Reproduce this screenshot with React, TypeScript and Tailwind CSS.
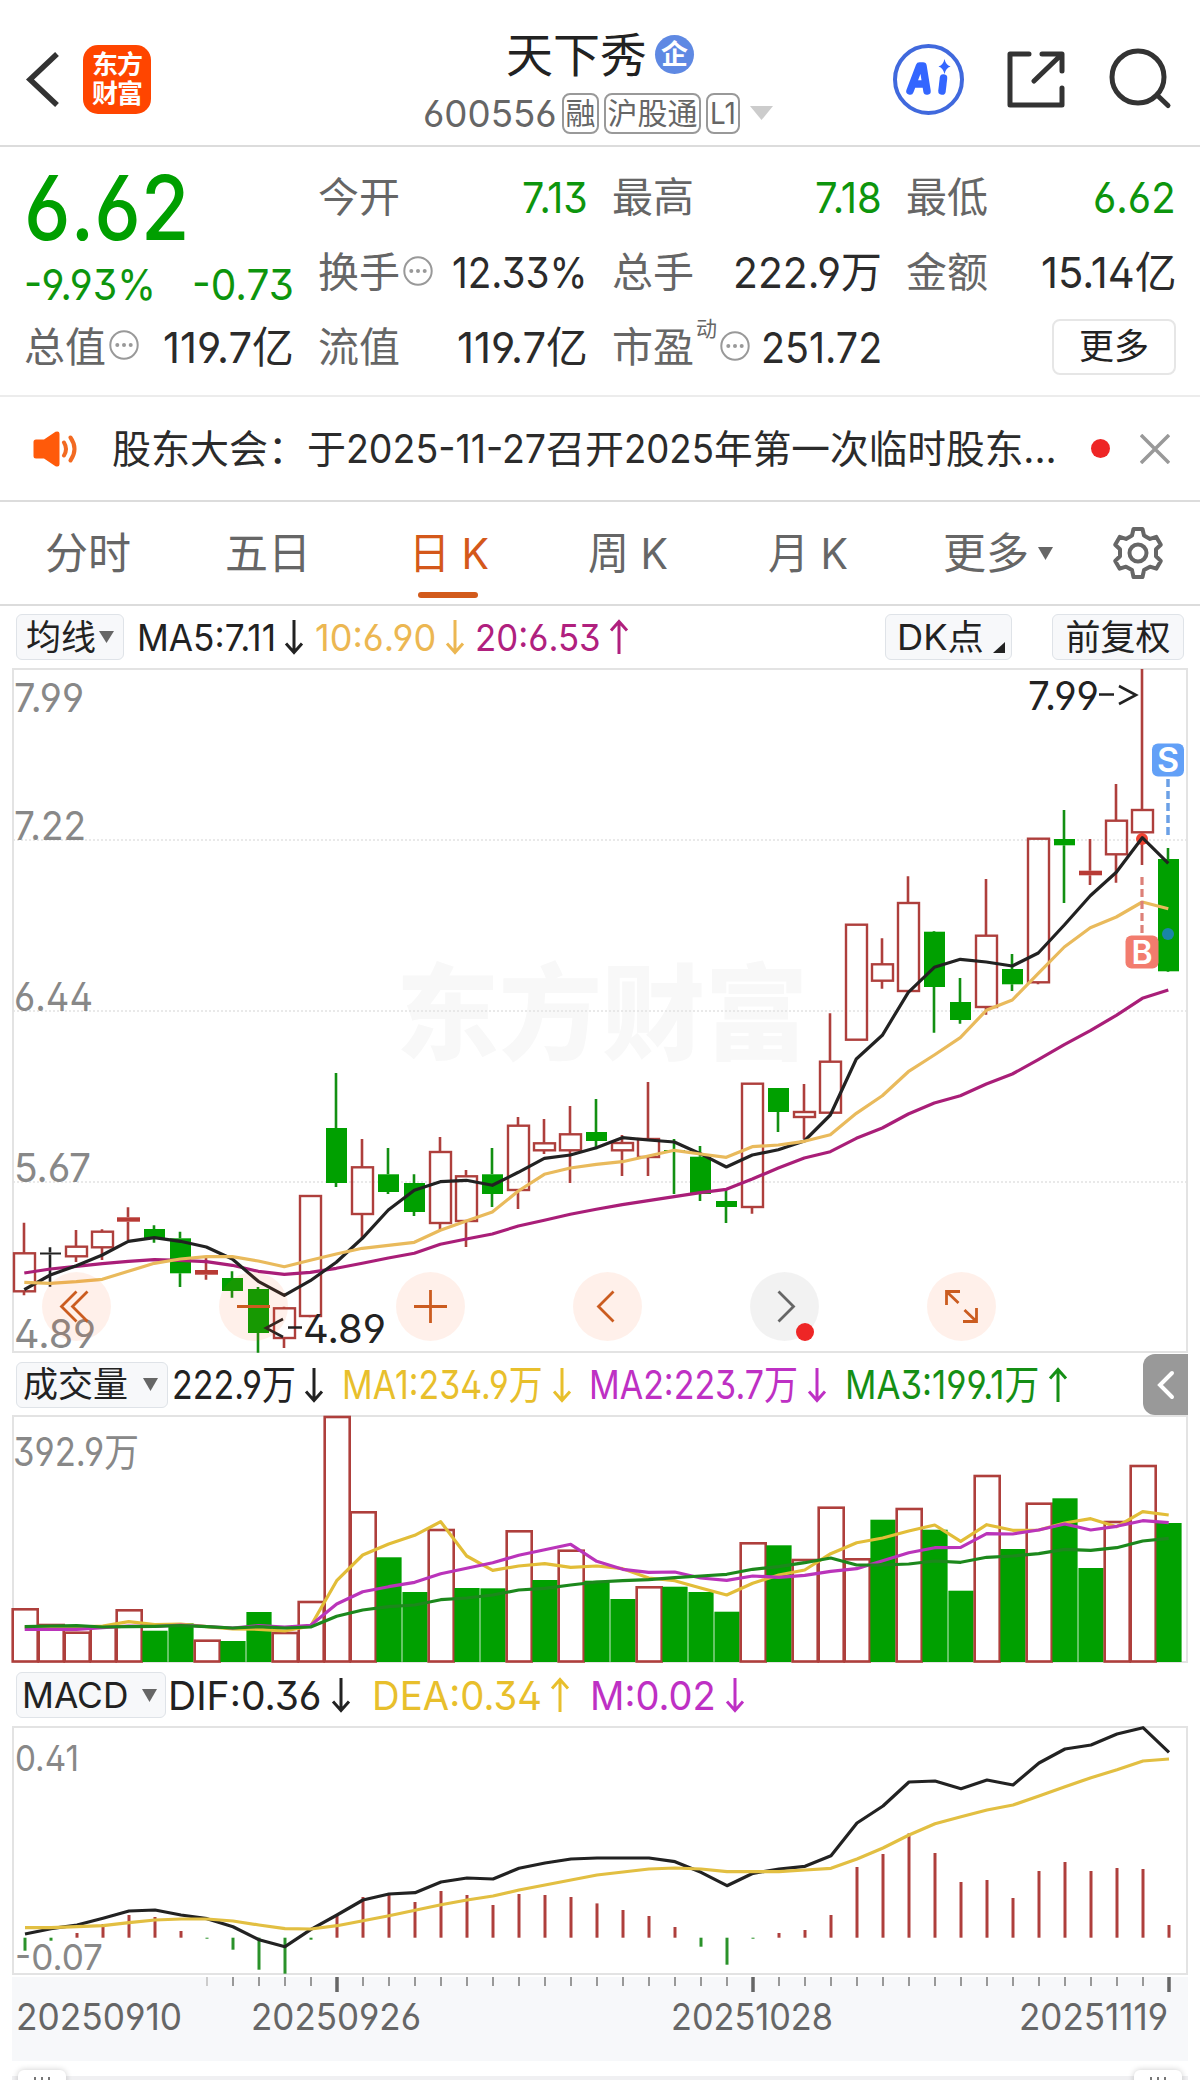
import React, { useLayoutEffect, useRef } from 'react';
import clsx from 'clsx';

const FONT = 'Inter, "Noto Sans CJK SC", sans-serif';
const RED = '#ae3f3c';
const GREEN = '#00a000';

// first column is centred on x=24, one column per trading day
const cx = (i: number) => 24 + i * 26;

type Candle = [kind: 'r' | 'g' | 'k' | 'f', high: number, top: number, bottom: number, low: number];

const CANDLES: Candle[] = [
  ['r', 1222.7, 1253.3, 1291.3, 1295.3],
  ['k', 1247.3, 1252.5, 1254.5, 1286.7],
  ['r', 1230, 1246.7, 1256.3, 1262],
  ['r', 1229.3, 1231.7, 1247.3, 1260],
  ['f', 1207.3, 1217.3, 1221.7, 1240],
  ['g', 1225.3, 1229, 1239, 1242.7],
  ['g', 1231.7, 1238.3, 1273.3, 1287],
  ['f', 1258, 1270, 1274.7, 1279.7],
  ['g', 1271.3, 1278, 1291, 1297.7],
  ['g', 1287, 1289, 1333, 1352.7],
  ['r', 1306.7, 1308.3, 1338, 1348],
  ['r', 1195, 1196, 1316, 1317.3],
  ['g', 1073, 1128, 1183, 1187],
  ['r', 1139, 1167.3, 1214, 1238],
  ['g', 1148, 1174.3, 1192, 1194],
  ['g', 1174.3, 1183, 1212, 1216],
  ['r', 1137, 1152, 1223, 1230],
  ['r', 1170, 1176.3, 1221, 1247],
  ['g', 1148, 1174.3, 1194, 1207],
  ['r', 1117, 1125.7, 1190, 1209],
  ['r', 1119, 1143.3, 1150.3, 1154],
  ['r', 1106, 1134.3, 1150.3, 1183],
  ['g', 1099, 1132, 1141, 1149.3],
  ['r', 1135, 1143, 1150.3, 1176],
  ['r', 1082, 1139, 1157, 1176],
  ['g', 1139, 1150, 1152, 1194],
  ['g', 1146, 1156.7, 1194, 1201],
  ['g', 1190, 1201, 1207, 1223],
  ['r', 1083, 1083.7, 1207, 1213.7],
  ['g', 1088, 1088, 1112, 1132],
  ['r', 1084, 1112, 1117, 1139],
  ['r', 1013.3, 1061.7, 1112.7, 1113],
  ['r', 924, 924.7, 1039.7, 1040],
  ['r', 938.3, 964.3, 980.7, 988.7],
  ['r', 876.3, 903, 991, 992],
  ['g', 931, 931.7, 987, 1032.7],
  ['g', 978, 1002, 1020, 1023.7],
  ['r', 879, 935.7, 1007, 1014.7],
  ['g', 954, 969, 984.3, 991],
  ['r', 838, 838.7, 982.3, 984.3],
  ['g', 810, 839, 845.3, 903],
  ['f', 839, 870.7, 875.3, 885],
  ['r', 784, 820.7, 854.3, 882.7],
  ['r', 669, 810, 832.3, 865],
  ['g', 848, 859, 971.3, 972],
];

const MA5 = [1289.7, 1275, 1265.7, 1255, 1241.3, 1237.7, 1241.3, 1247, 1259, 1281.3, 1295.3, 1280.7, 1262.3, 1238.3, 1210, 1190.3, 1181.7, 1180.3, 1185.3, 1172.3, 1158.3, 1155, 1147.7, 1137.7, 1140, 1142, 1153.7, 1167, 1155, 1149.7, 1141, 1115, 1059, 1035.3, 992.3, 967.3, 959.3, 962, 966, 953, 925, 895.7, 872.3, 837.7, 863.3];
const MA10 = [1282.3, 1283.3, 1281.7, 1279.3, 1271.3, 1263.3, 1259, 1256.7, 1256.7, 1261, 1266.7, 1260.3, 1254, 1248.3, 1245.3, 1242.3, 1230.3, 1221, 1212, 1191, 1174.3, 1168, 1164.3, 1161.7, 1156, 1150.3, 1154, 1157.3, 1146.7, 1145, 1141.3, 1134.7, 1113.3, 1095.7, 1071.7, 1055, 1037.7, 1010.3, 1000, 973.3, 947, 927.7, 917, 902, 908.7];
const MA20 = [1273, 1269, 1266.3, 1263.7, 1261.3, 1259.7, 1260.3, 1261.7, 1265.3, 1271.3, 1274.3, 1272.3, 1268.3, 1263.3, 1258, 1253.3, 1244.3, 1239, 1234, 1226, 1220.3, 1214.3, 1209.3, 1204.7, 1200.7, 1196.7, 1192.7, 1189.3, 1179, 1168, 1158, 1151.7, 1138.3, 1128, 1114, 1103, 1095.7, 1084, 1074, 1059.7, 1044.7, 1030.7, 1015.3, 998.3, 990];

const VOL_KIND = 'rrrrrggrggrrrrggrggrgrggrgggrgrrrgrggrgrggrrg';
const VOL_TOP = [1609.3, 1625, 1632.7, 1627, 1610.3, 1630.7, 1623.3, 1640.7, 1641, 1612, 1633, 1602, 1417, 1512.3, 1557.3, 1592, 1530, 1588, 1588.3, 1531.3, 1580, 1550.7, 1580.7, 1599, 1587.3, 1586.7, 1592, 1611.7, 1543.3, 1545.3, 1560, 1507.7, 1559.3, 1519.7, 1509, 1529.7, 1590.7, 1476, 1549, 1503.7, 1498.3, 1568, 1522, 1466, 1523];
const VMA1 = [1627, 1627, 1627, 1626, 1621.7, 1624.7, 1624, 1626.7, 1629, 1629.3, 1631, 1626, 1580.7, 1555, 1544, 1535.3, 1521.7, 1556, 1570.3, 1566, 1563.7, 1567.3, 1566, 1568.7, 1578, 1580.7, 1588, 1595, 1583.3, 1575, 1570, 1553.7, 1542.7, 1538, 1531, 1525, 1541.3, 1524.7, 1530.3, 1530, 1523, 1518.7, 1526.7, 1511.7, 1515];
const VMA2 = [1629.3, 1629.3, 1629.3, 1627.7, 1626, 1626.5, 1625, 1626.5, 1628, 1625.7, 1627, 1625.3, 1604, 1591.7, 1586.7, 1582.3, 1573.7, 1568.3, 1562.7, 1555.3, 1549.7, 1544.3, 1561.3, 1569.3, 1572.3, 1572, 1578, 1580.3, 1576, 1577.3, 1575.3, 1571.3, 1568.7, 1560.7, 1552.7, 1547.7, 1547.3, 1533.7, 1534, 1530, 1524, 1530, 1526.3, 1520.7, 1522.7];
const VMA3 = [1626.7, 1626, 1625.7, 1627, 1626.7, 1626.3, 1625.5, 1626.7, 1628, 1626.7, 1628, 1627, 1616.3, 1610, 1606.7, 1605, 1599.7, 1598, 1595, 1590, 1588.3, 1585, 1582, 1580.7, 1579.7, 1577.7, 1576, 1574.3, 1569.3, 1566.7, 1562.7, 1558, 1565, 1565, 1564, 1561, 1562.3, 1557.3, 1556, 1553.7, 1549.3, 1550.3, 1547.7, 1541, 1538.3];

const DIF = [1934, 1928.7, 1925, 1918.3, 1911, 1910, 1915, 1918.7, 1926.7, 1939.7, 1946.7, 1929.3, 1915, 1900, 1894, 1892.7, 1882, 1878, 1879, 1868.3, 1863, 1859, 1858, 1858, 1858, 1861.7, 1872.3, 1885.7, 1873.3, 1869, 1866.3, 1855.7, 1823, 1806, 1782, 1781, 1788.7, 1780, 1785, 1763, 1749, 1745, 1734, 1727.7, 1752.3];
const DEA = [1927.7, 1927.7, 1926.7, 1925.7, 1922.7, 1920, 1919, 1919, 1921, 1925, 1928.7, 1929, 1925.7, 1920.7, 1915.7, 1910.3, 1904.7, 1900, 1896, 1890, 1885, 1880, 1875, 1872, 1869, 1868, 1869, 1871.7, 1871.7, 1871.7, 1870, 1868.3, 1859, 1848, 1835, 1823.7, 1816.7, 1810, 1805, 1796, 1786.7, 1777.7, 1769.7, 1761, 1759];
const HIST = [-13, -3, 4.7, 13.7, 22.7, 20.7, 6.7, -1, -12, -32, -36, -2, 22.7, 40.7, 43.7, 35.7, 46.7, 42.7, 32.7, 43.7, 42.7, 40.7, 34.3, 27.7, 21.7, 10.7, -9, -27, -1, 4.7, 7.7, 22.7, 70.7, 83.7, 104.3, 84.7, 55.7, 57.7, 39.7, 66.7, 75.7, 66.7, 69.7, 68.7, 12.7];

// Squeezes or stretches a line of text to exactly `w` pixels
const Fit: React.FC<{ w: number; className?: string; children: string }> = ({ w, className, children }) => {
  const ref = useRef<HTMLSpanElement>(null);
  useLayoutEffect(() => {
    const el = ref.current;
    if (el) el.style.transform = `scaleX(${w / el.offsetWidth})`;
  }, [w, children]);
  return (
    <span className={clsx('inline-block shrink-0 whitespace-nowrap', className)} style={{ width: w }}>
      <span ref={ref} className="inline-block origin-left">{children}</span>
    </span>
  );
};

const Line: React.FC<{ data: number[]; color: string; dx?: number }> = ({ data, color, dx = 0.3 }) => (
  <polyline
    points={data.map((y, i) => `${cx(i) + dx},${y}`).join(' ')}
    fill="none"
    stroke={color}
    strokeWidth={3.2}
    strokeLinejoin="round"
  />
);

const Label: React.FC<{ x: number; y: number; w: number; size?: number; color?: string; children: string }> = ({
  x, y, w, size = 39, color = '#888', children,
}) => (
  <text x={x} y={y} fontSize={size} fill={color} textLength={w} lengthAdjust="spacingAndGlyphs">{children}</text>
);

const Dots = ({ className }: { className?: string }) => (
  <svg className={clsx('w-[30px] h-[30px] shrink-0', className)} viewBox="0 0 30 30">
    <circle cx="15" cy="15" r="13.7" fill="none" stroke="#999" strokeWidth="2" />
    <circle cx="8.3" cy="15" r="2" fill="#999" />
    <circle cx="15" cy="15" r="2" fill="#999" />
    <circle cx="21.7" cy="15" r="2" fill="#999" />
  </svg>
);

const Arrow = ({ up, className }: { up?: boolean; className?: string }) => (
  <svg className={clsx('w-[20px] h-[36px] shrink-0', up && 'rotate-180', className)} viewBox="0 0 20 36" fill="none" stroke="currentColor" strokeWidth="3">
    <path d="M10 1v32M2 24.5l8 9 8-9" />
  </svg>
);

const Triangle = ({ className }: { className?: string }) => (
  <svg className={clsx('shrink-0', className)} viewBox="0 0 16 13" preserveAspectRatio="none">
    <path d="M0 0h16L8 13z" fill="currentColor" />
  </svg>
);

const Chip: React.FC<{ className?: string; children: React.ReactNode }> = ({ className, children }) => (
  <div className={clsx('flex h-[46px] shrink-0 items-center rounded-md border border-[#dfe3e8] bg-[#f7f8fa] text-[35px] text-[#222]', className)}>
    {children}
  </div>
);

interface StatProps {
  label: string;
  value: string;
  w: number;
  green?: boolean;
  extra?: React.ReactNode;
}

const Stat: React.FC<StatProps> = ({ label, value, w, green, extra }) => (
  <div className="flex h-[75px] items-center">
    <span className="-ml-[2px] text-[41px] text-[#666]">{label}</span>
    {extra}
    <Fit w={w} className={clsx('ml-auto text-[43px]', green ? 'text-[#0d950d]' : 'text-[#2b2b2b]')}>{value}</Fit>
  </div>
);

const Header = () => (
  <header className="flex h-[147px] border-b-2 border-[#dcdcdc]">
    <svg className="mt-[51px] ml-[25px] h-[57px] w-[35px]" viewBox="0 0 35 57" fill="none" stroke="#333" strokeWidth="5.5">
      <path d="M32 3L5 28.500L32 54" />
    </svg>
    <div className="mt-[45px] ml-[23px] flex h-[69px] w-[68px] flex-col items-center justify-center gap-[3px] rounded-[15px] bg-[#ff4500] text-[26px] font-bold text-white">
      <span className="tracking-[-1px]">东方</span>
      <span className="tracking-[-1px]">财富</span>
    </div>
    <div className="ml-[272px] w-[352px]">
      <div className="mt-[31px] ml-[83px] flex h-[46px] items-center">
        <span className="text-[47px] text-[#222]">天下秀</span>
        <span className="ml-[8px] flex h-[39px] w-[39px] items-center justify-center rounded-full bg-[#5f89e3] text-[27px] font-bold text-white">企</span>
      </div>
      <div className="mt-[15px] flex h-[42px] items-center text-[#666]">
        <Fit w={134} className="mr-[5px] text-[37px]">600556</Fit>
        <span className="flex h-[41px] w-[37px] items-center justify-center rounded-lg border-2 border-[#999] text-[30px]">融</span>
        <span className="ml-[5px] flex h-[41px] w-[97px] items-center justify-center rounded-lg border-2 border-[#999] text-[30px]">沪股通</span>
        <span className="ml-[5px] flex h-[41px] w-[34px] items-center justify-center rounded-lg border-2 border-[#999] text-[30px]">
          <Fit w={26}>L1</Fit>
        </span>
        <Triangle className="ml-[10px] h-[14px] w-[23px] text-[#ccc]" />
      </div>
    </div>
    <svg className="mt-[43px] ml-[117px] h-[73px] w-[73px]" viewBox="0 0 73 73">
      <circle cx="36.500" cy="36.500" r="33.500" fill="none" stroke="#4069dd" strokeWidth="4" />
      <g fill="none" stroke="#3366ff" strokeWidth="7.500" strokeLinecap="round" strokeLinejoin="round">
        <path d="M18 48L27.500 23H31L35 48M22 41h11" />
        <path d="M51.500 35L50 48" />
      </g>
      <path d="M52.500 16q1.200 5.800 6 7.500q-4.800 1.700-6 7.500q-1.200-5.800-6-7.500q4.800-1.700 6-7.500z" fill="#3366ff" />
    </svg>
    <svg className="mt-[48px] ml-[39px] h-[64px] w-[64px]" viewBox="0 0 64 64" fill="none" stroke="#333" strokeWidth="5" strokeLinecap="round" strokeLinejoin="round">
      <path d="M25 6H6V57H58V40M38 6H58V23M57 7L30 33" />
    </svg>
    <svg className="mt-[46px] ml-[39px] h-[66px] w-[66px]" viewBox="0 0 66 66" fill="none" stroke="#333" strokeWidth="5" strokeLinecap="round">
      <circle cx="31" cy="31" r="26" />
      <path d="M50 49L61 59.500" />
    </svg>
  </header>
);

const Quote = () => (
  <section className="flex h-[250px] gap-[26px] border-b-2 border-[#ececec] pt-[13px] pl-[24px]">
    <div className="w-[270px]">
      <div className="flex h-[95px] items-center text-[89px] font-medium text-[#009f00]">
        <Fit w={165}>6.62</Fit>
      </div>
      <div className="flex h-[58px] items-center justify-between text-[43px] text-[#0d950d]">
        <Fit w={132}>-9.93%</Fit>
        <Fit w={102}>-0.73</Fit>
      </div>
      <div className="flex h-[68px] items-center">
        <span className="text-[41px] text-[#666]">总值</span>
        <Dots className="ml-[3px] -mt-1" />
        <Fit w={131} className="ml-auto text-[43px] text-[#2b2b2b]">119.7亿</Fit>
      </div>
    </div>
    <div className="w-[268px]">
      <Stat label="今开" value="7.13" w={66} green />
      <Stat label="换手" value="12.33%" w={136} extra={<Dots className="ml-[3px] -mt-1" />} />
      <Stat label="流值" value="119.7亿" w={131} />
    </div>
    <div className="w-[268px]">
      <Stat label="最高" value="7.18" w={67} green />
      <Stat label="总手" value="222.9万" w={149} />
      <Stat
        label="市盈"
        value="251.72"
        w={121}
        extra={
          <>
            <span className="ml-[2px] mb-[38px] text-[21px] text-[#666]">动</span>
            <Dots className="ml-[3px] -mt-1" />
          </>
        }
      />
    </div>
    <div className="w-[268px]">
      <Stat label="最低" value="6.62" w={83} green />
      <Stat label="金额" value="15.14亿" w={135} />
      <div className="flex h-[73px] items-center justify-end">
        <button className="h-[56px] w-[124px] rounded-lg border-2 border-[#e6e6e6] text-[35px] text-[#222]">更多</button>
      </div>
    </div>
  </section>
);

const Notice = () => (
  <section className="flex h-[105px] items-center border-b-2 border-[#dcdcdc]">
    <svg className="ml-[33px] h-[36px] w-[46px]" viewBox="0 0 46 36">
      <path d="M3 8.500h8L22.500 .800q4-1.200 4 2v30.400q0 3.200-4 2L11 27.500H3q-2.500 0-2.500-2.500v-14q0-2.500 2.500-2.500z" fill="#ff5a0a" />
      <path d="M31 11.500q4 6.500 0 13M37.500 6.500q8 11.500 0 23" fill="none" stroke="#f26a22" strokeWidth="4" strokeLinecap="round" />
    </svg>
    <div className="ml-[33px] flex text-[39px] text-[#2b2b2b]">
      <span>股东大会：于</span>
      <Fit w={200}>2025-11-27</Fit>
      <span>召开</span>
      <Fit w={90}>2025</Fit>
      <Fit w={343}>年第一次临时股东...</Fit>
    </div>
    <span className="ml-[34px] h-[19px] w-[19px] rounded-full bg-[#ee2626]" />
    <svg className="ml-[30px] h-[30px] w-[30px]" viewBox="0 0 30 30" stroke="#999" strokeWidth="3.5">
      <path d="M1 1l28 28M29 1L1 29" />
    </svg>
  </section>
);

const Tabs = () => (
  <nav className="flex h-[104px] items-center border-b-2 border-[#dcdcdc] text-[43px] text-[#666]">
    <span className="ml-[45px] w-[180px]">分时</span>
    <span className="w-[184px]">五日</span>
    <span className="relative w-[179px] text-[#d4581a]">
      <Fit w={80}>日 K</Fit>
      <span className="absolute top-[60px] left-[9px] h-[6px] w-[60px] rounded-full bg-[#d25a1b]" />
    </span>
    <span className="w-[180px]"><Fit w={80}>周 K</Fit></span>
    <span className="w-[175px]"><Fit w={80}>月 K</Fit></span>
    <span className="w-[95px]">更多</span>
    <Triangle className="h-[13px] w-[15px]" />
    <svg className="ml-[58px] h-[54px] w-[54px]" viewBox="0 0 54 54" fill="none" stroke="#666" strokeWidth="4" strokeLinejoin="round">
      <path d="M22.500 3h9l1.500 6.500 6 3.400 6.300-2 4.500 7.800-4.800 4.600v7l4.800 4.600-4.500 7.800-6.300-2-6 3.400-1.500 6.900h-9l-1.500-6.900-6-3.400-6.300 2-4.500-7.800 4.800-4.600v-7l-4.800-4.600 4.500-7.800 6.300 2 6-3.400z" />
      <circle cx="27" cy="27" r="8.500" />
    </svg>
  </nav>
);

const Toolbar = () => (
  <div className="flex h-[62px] items-center pl-4 text-[37px]">
    <Chip className="w-[108px] justify-center gap-[3px]">
      <span>均线</span>
      <Triangle className="h-[12px] w-[15px] text-[#666]" />
    </Chip>
    <Fit w={139} className="ml-[13px] text-[#222]">MA5:7.11</Fit>
    <Arrow className="ml-[8px] text-[#222]" />
    <Fit w={121} className="ml-[11px] text-[#ecb752]">10:6.90</Fit>
    <Arrow className="ml-[9px] text-[#ecb752]" />
    <Fit w={126} className="ml-[10px] text-[#b0207e]">20:6.53</Fit>
    <Arrow up className="ml-[8px] text-[#b0207e]" />
    <Chip className="ml-auto w-[127px] pl-[11px]">
      <Fit w={87}>DK点</Fit>
      <svg className="mt-[20px] ml-[9px] h-[11px] w-[12px]" viewBox="0 0 12 11"><path d="M12 0v11H0z" fill="#222" /></svg>
    </Chip>
    <Chip className="mr-4 ml-[40px] w-[132px] justify-center">前复权</Chip>
  </div>
);

const FLOAT_X = [76.5, 253.5, 430.5, 607.5, 784.5, 961.5];

const PriceChart = () => (
  <svg className="block h-[686px] w-[1200px] overflow-visible" viewBox="0 668 1200 686">
    <rect x="13" y="669" width="1174" height="683" fill="none" stroke="#e3e3e3" strokeWidth="2" />
    <text x="396" y="1052" fontSize="104" fontWeight="900" fill="#f8f8f8" textLength="412" lengthAdjust="spacingAndGlyphs">东方财富</text>
    {[840, 1011, 1182].map((y) => (
      <path key={y} d={`M13 ${y}H1187`} stroke="#e2e2e2" strokeWidth="1.500" strokeDasharray="2 2" />
    ))}
    <Label x={14} y={712} w={70}>7.99</Label>
    <Label x={14} y={840} w={72}>7.22</Label>
    <Label x={14} y={1011} w={79}>6.44</Label>
    <Label x={14} y={1182} w={77}>5.67</Label>
    <Label x={14} y={1348} w={82}>4.89</Label>

    {CANDLES.map(([kind, high, top, bottom, low], i) => {
      const x = cx(i);
      const color = kind === 'g' ? '#129012' : kind === 'k' ? '#222' : RED;
      return (
        <g key={i}>
          <path d={`M${x} ${high}V${top}M${x} ${bottom}V${low}`} stroke={color} strokeWidth="2.600" />
          {kind === 'r' && <rect x={x - 10} y={top} width={21} height={bottom - top} fill="none" stroke={RED} strokeWidth="2.400" />}
          {kind === 'g' && <rect x={x - 10} y={top} width={21} height={bottom - top} fill={GREEN} />}
          {kind === 'f' && <rect x={x - 11} y={top} width={23} height={bottom - top} fill="#b83a35" />}
          {kind === 'k' && <rect x={x - 10} y={top} width={21} height={bottom - top} fill="#222" />}
        </g>
      );
    })}

    <circle cx="1142" cy="839" r="6" fill="#ee4433" />
    <Line data={MA20} color="#a91e78" />
    <Line data={MA5} color="#222" />
    <Line data={MA10} color="#e9ba5c" />

    <path d="M1142 877V933" stroke="#dc8078" strokeWidth="3.200" strokeDasharray="8 4" />
    <path d="M1168 779V836" stroke="#6ba0e6" strokeWidth="3.500" strokeDasharray="8 4" />
    <circle cx="1168" cy="934" r="6" fill="#1a85a8" />
    <rect x="1152" y="743.500" width="32" height="33" rx="6" fill="#62a0f7" />
    <text x="1168" y="772" fontSize="34" fontWeight="600" fill="#fff" textAnchor="middle">S</text>
    <rect x="1125.500" y="935.500" width="33" height="33" rx="6" fill="#f27c6e" />
    <text x="1142" y="963.500" fontSize="32" fontWeight="600" fill="#fff" textAnchor="middle">B</text>

    <Label x={1028} y={710} w={71} color="#222">7.99</Label>
    <path d="M1099 694.500h15M1119 686l17 9-17 9" fill="none" stroke="#222" strokeWidth="2.600" />
    <Label x={303} y={1343} w={83} color="#222">4.89</Label>
    <path d="M283 1319l-17 9 17 9M288 1327.500h14" fill="none" stroke="#222" strokeWidth="2.600" />

    {FLOAT_X.map((x, i) => (
      <circle key={x} cx={x} cy="1306.500" r="34.500" fill={i === 4 ? 'rgba(0,0,0,0.05)' : 'rgba(255,90,20,0.09)'} />
    ))}
    <g fill="none" stroke="#cb5c20" strokeWidth="2.800">
      <path d="M76.500 1291.500l-15 15 15 15M87.500 1291.500l-15 15 15 15" />
      <path d="M237 1306.500h33" />
      <path d="M414 1306.500h33M430.500 1290v33" />
      <path d="M613.500 1291.500l-15 15 15 15" />
      <path d="M778.500 1291.500l15 15-15 15" stroke="#666" />
      <path d="M960 1291.500H946.500V1305M946.500 1291.500L958.500 1303M963 1321.500h13.500V1308M976.500 1321.500L964.500 1310" />
    </g>
    <circle cx="805" cy="1332" r="9" fill="#ee2626" />
  </svg>
);

const VolumeChart = () => (
  <svg className="block h-[249px] w-[1200px] overflow-visible" viewBox="0 1415 1200 249">
    <rect x="13" y="1416" width="1174" height="246" fill="none" stroke="#e3e3e3" strokeWidth="2" />
    <Label x={13} y={1466} w={126}>392.9万</Label>
    {VOL_TOP.map((top, i) =>
      VOL_KIND[i] === 'r' ? (
        <rect key={i} x={cx(i) - 11.3} y={top} width={25} height={1661.5 - top} fill="none" stroke={RED} strokeWidth="2.600" />
      ) : (
        <rect key={i} x={cx(i) - 11.6} y={top} width={25.2} height={1662 - top} fill={GREEN} />
      )
    )}
    <Line data={VMA1} color="#e2bd38" dx={0.7} />
    <Line data={VMA2} color="#ba34ba" dx={0.7} />
    <Line data={VMA3} color="#1c881c" dx={0.7} />
  </svg>
);

const MacdChart = () => (
  <svg className="block h-[250px] w-[1200px] overflow-visible" viewBox="0 1726 1200 250">
    <rect x="13" y="1727" width="1174" height="247" fill="none" stroke="#e3e3e3" strokeWidth="2" />
    <Label x={15} y={1771} w={64} size={36}>0.41</Label>
    <Label x={15} y={1970} w={88} size={36}>-0.07</Label>
    {HIST.map((v, i) => (
      <path key={i} d={`M${cx(i) + 1} 1937.700v${-v}`} stroke={v > 0 ? RED : '#2a922a'} strokeWidth="3" />
    ))}
    <Line data={DIF} color="#222" dx={1} />
    <Line data={DEA} color="#e2bf42" dx={1} />
  </svg>
);

const TimeAxis = () => (
  <svg className="mx-3 mt-px block h-[84px] w-[1176px] bg-[#f7f8fa]" viewBox="12 1977 1176 84">
    {Array.from({ length: 38 }, (_, k) => k + 7).map((i) => {
      const major = i === 12 || i === 28 || i === 44;
      return (
        <path
          key={i}
          d={`M${cx(i) + 1} 1977v${major ? 15 : 9}`}
          stroke={i === 7 ? '#ccc' : major ? '#666' : '#999'}
          strokeWidth={major ? 3.5 : 2}
        />
      );
    })}
    <Label x={16} y={2030} w={166} size={37} color="#666">20250910</Label>
    <Label x={251} y={2030} w={170} size={37} color="#666">20250926</Label>
    <Label x={671} y={2030} w={162} size={37} color="#666">20251028</Label>
    <Label x={1019} y={2030} w={149} size={37} color="#666">20251119</Label>
  </svg>
);

const Handle = () => (
  <span className="flex h-[30px] w-[48px] justify-center gap-[5px] rounded-md bg-white pt-[7px] shadow-[0_0_6px_rgba(0,0,0,0.2)]">
    <i className="h-4 w-[2px] bg-[#777]" />
    <i className="h-4 w-[2px] bg-[#777]" />
    <i className="h-4 w-[2px] bg-[#777]" />
  </span>
);

export default function App() {
  return (
    <div
      className="h-[2080px] w-[1200px] overflow-hidden bg-white leading-none [font-feature-settings:'ss01','cv03','cv04']"
      style={{ fontFamily: FONT }}
    >
      <Header />
      <Quote />
      <Notice />
      <Tabs />
      <Toolbar />
      <PriceChart />
      <div className="flex h-[61px] items-center pl-4 text-[40px]">
        <Chip className="w-[152px] pl-[6px]">
          <span>成交量</span>
          <Triangle className="ml-[15px] h-[13px] w-[15px] text-[#666]" />
        </Chip>
        <Fit w={124} className="ml-[4px] text-[#222]">222.9万</Fit>
        <Arrow className="ml-[8px] text-[#222]" />
        <Fit w={201} className="ml-[18px] text-[#e8bf2c]">MA1:234.9万</Fit>
        <Arrow className="ml-[9px] text-[#e8bf2c]" />
        <Fit w={209} className="ml-[17px] text-[#be30c4]">MA2:223.7万</Fit>
        <Arrow className="ml-[9px] text-[#be30c4]" />
        <Fit w={194} className="ml-[18px] text-[#158f15]">MA3:199.1万</Fit>
        <Arrow up className="ml-[9px] text-[#158f15]" />
        <div className="mr-3 ml-auto flex h-[61px] w-[45px] items-center justify-center rounded-l-xl bg-[#999]">
          <svg className="h-[30px] w-[18px]" viewBox="0 0 18 30" fill="none" stroke="#fff" strokeWidth="4" strokeLinecap="round">
            <path d="M15 3L3 15l12 12" />
          </svg>
        </div>
      </div>
      <VolumeChart />
      <div className="flex h-[62px] items-center pl-4 text-[39px]">
        <Chip className="w-[150px] pl-[5px]">
          <Fit w={106}>MACD</Fit>
          <Triangle className="ml-[14px] h-[13px] w-[15px] text-[#666]" />
        </Chip>
        <Fit w={154} className="ml-[2px] text-[#222]">DIF:0.36</Fit>
        <Arrow className="ml-[9px] text-[#222]" />
        <Fit w={170} className="ml-[21px] text-[#e8bf2c]">DEA:0.34</Fit>
        <Arrow up className="ml-[8px] text-[#e8bf2c]" />
        <Fit w={126} className="ml-[20px] text-[#be30c4]">M:0.02</Fit>
        <Arrow className="ml-[9px] text-[#be30c4]" />
      </div>
      <MacdChart />
      <TimeAxis />
      <div className="mx-3 mt-[9px] flex justify-between px-[6px] bg-linear-to-b from-white from-[6px] to-[#f0f0f2] to-[6px]">
        <Handle />
        <Handle />
      </div>
    </div>
  );
}
